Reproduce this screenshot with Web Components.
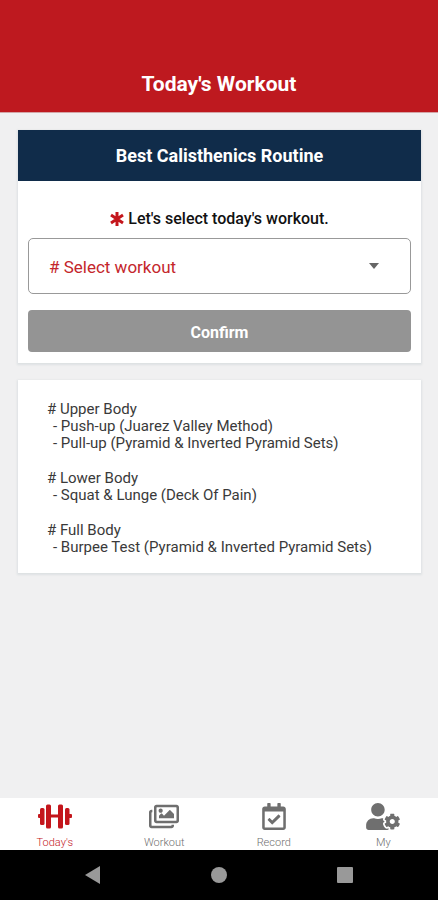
<!DOCTYPE html>
<html lang="en">
<head>
<meta charset="utf-8">
<meta name="viewport" content="width=device-width, initial-scale=1">
<title>Today's Workout</title>
<style>
  body {
    margin: 0;
    font-family: Roboto, "Liberation Sans", sans-serif;
    background-color: #f0f0f1;
    color: #3a3a3a;
  }
</style>
</head>
<body>
<workout-app></workout-app>

<script>
const icons = {
  dumbbell: `<svg width="34" height="27" viewBox="0 0 34 27"><rect y="11" width="4" height="4" rx="1"/><rect x="30" y="11" width="4" height="4" rx="1"/><rect x="10" y="11.500" width="14" height="3"/><rect x="2" y="5" width="4.500" height="17" rx="1.500"/><rect x="8" y="1.500" width="5" height="24" rx="1.500"/><rect x="20" y="1.500" width="5" height="24" rx="1.500"/><rect x="27" y="5" width="4.500" height="17" rx="1.500"/></svg>`,
  images: `<svg width="30" height="27" viewBox="0 0 576 512"><path d="M480 416v16c0 26.51-21.49 48-48 48H48c-26.51 0-48-21.49-48-48V176c0-26.51 21.49-48 48-48h16v48H54a6 6 0 0 0-6 6v244a6 6 0 0 0 6 6h372a6 6 0 0 0 6-6v-10h48zm42-336H150a6 6 0 0 0-6 6v244a6 6 0 0 0 6 6h372a6 6 0 0 0 6-6V86a6 6 0 0 0-6-6zm6-48c26.51 0 48 21.49 48 48v256c0 26.51-21.49 48-48 48H144c-26.51 0-48-21.49-48-48V80c0-26.51 21.49-48 48-48h384zM264 144c0 22.091-17.909 40-40 40s-40-17.909-40-40 17.909-40 40-40 40 17.909 40 40zm-72 96l39.515-39.515c4.686-4.686 12.284-4.686 16.971 0L288 240l103.515-103.515c4.686-4.686 12.284-4.686 16.971 0L480 208v80H192v-48z"/></svg>`,
  calendar: `<svg width="24" height="27" viewBox="0 0 448 512"><path d="M400 64h-48V12c0-6.627-5.373-12-12-12h-40c-6.627 0-12 5.373-12 12v52H160V12c0-6.627-5.373-12-12-12h-40c-6.627 0-12 5.373-12 12v52H48C21.49 64 0 85.49 0 112v352c0 26.51 21.49 48 48 48h352c26.51 0 48-21.49 48-48V112c0-26.51-21.49-48-48-48zm-6 400H54a6 6 0 0 1-6-6V160h352v298a6 6 0 0 1-6 6zm-52.849-200.65L198.842 404.519c-4.705 4.667-12.303 4.637-16.971-.068l-75.091-75.699c-4.667-4.705-4.637-12.303.068-16.971l22.719-22.536c4.705-4.667 12.303-4.637 16.97.069l44.104 44.461 111.072-110.181c4.705-4.667 12.303-4.637 16.971.068l22.536 22.718c4.667 4.705 4.636 12.303-.069 16.97z"/></svg>`,
  user: `<svg width="34" height="27" viewBox="0 0 640 512"><path d="M610.5 373.3c2.6-14.1 2.6-28.5 0-42.6l25.8-14.9c3-1.7 4.3-5.2 3.3-8.5-6.7-21.6-18.2-41.2-33.2-57.4-2.3-2.5-6-3.1-9-1.4l-25.8 14.9c-10.9-9.3-23.4-16.5-36.9-21.3v-29.8c0-3.4-2.4-6.4-5.7-7.1-22.3-5-45-4.8-66.2 0-3.3.7-5.7 3.7-5.7 7.1v29.8c-13.5 4.8-26 12-36.9 21.3l-25.8-14.9c-2.9-1.7-6.7-1.1-9 1.4-15 16.2-26.5 35.8-33.2 57.4-1 3.3.4 6.8 3.3 8.5l25.8 14.9c-2.6 14.1-2.6 28.5 0 42.6l-25.8 14.9c-3 1.7-4.3 5.2-3.3 8.5 6.7 21.6 18.2 41.1 33.2 57.4 2.3 2.5 6 3.1 9 1.4l25.8-14.9c10.9 9.3 23.4 16.5 36.9 21.3v29.8c0 3.4 2.4 6.4 5.7 7.1 22.3 5 45 4.8 66.2 0 3.3-.7 5.7-3.7 5.7-7.1v-29.8c13.5-4.8 26-12 36.9-21.3l25.8 14.9c2.9 1.7 6.7 1.1 9-1.4 15-16.2 26.5-35.8 33.2-57.4 1-3.3-.4-6.8-3.3-8.5l-25.8-14.9zM496 400.5c-26.8 0-48.5-21.8-48.5-48.5s21.8-48.5 48.5-48.5 48.5 21.8 48.5 48.5-21.7 48.5-48.5 48.5zM224 256c70.7 0 128-57.3 128-128S294.7 0 224 0 96 57.3 96 128s57.3 128 128 128zm201.2 226.5c-2.3-1.2-4.6-2.6-6.8-3.9l-7.9 4.6c-6 3.4-12.8 5.3-19.6 5.3-10.9 0-21.4-4.6-28.9-12.6-18.3-19.8-32.3-43.9-40.2-69.6-5.5-17.7 1.9-36.4 17.9-45.7l7.9-4.6c-.1-2.6-.1-5.2 0-7.8l-7.9-4.6c-16-9.2-23.4-28-17.9-45.7.9-2.9 2.2-5.8 3.2-8.7-3.8-.3-7.5-1.2-11.4-1.2h-16.7c-22.2 10.2-46.9 16-72.9 16s-50.6-5.8-72.9-16h-16.7C60.2 288 0 348.2 0 422.4V464c0 26.5 21.5 48 48 48h352c10.1 0 19.5-3.2 27.2-8.5-1.2-3.8-2-7.7-2-11.8v-9.2z"/></svg>`,
};

class AppHeader extends HTMLElement {
  constructor() {
    super();
    this.attachShadow({ mode: "open" });
  }
  connectedCallback() {
    this.shadowRoot.innerHTML = `
    <style>
      :host {
        display: block;
        padding: 70px 16px 14px;
        background-color: #be191f;
        border-bottom: 1px solid #d3a5a7;
        color: #fff;
        text-align: center;
      }
      h1 {
        margin: 0;
        font-size: 21px;
        line-height: 28px;
        font-weight: 700;
      }
    </style>
    <h1><slot></slot></h1>
    `;
  }
}

class AppCard extends HTMLElement {
  constructor() {
    super();
    this.attachShadow({ mode: "open" });
  }
  connectedCallback() {
    const title = this.getAttribute("heading");
    this.shadowRoot.innerHTML = `
    <style>
      :host {
        display: block;
        background-color: #fff;
        box-shadow: 0 1px 2px 1px #dde1e3;
      }
      h2 {
        margin: 0;
        background-color: #102c4a;
        color: #fff;
        font-size: 18px;
        line-height: 51px;
        font-weight: 700;
        text-align: center;
      }
    </style>
    ${title ? `<h2>${title}</h2>` : ""}
    <slot></slot>
    `;
  }
}

class WorkoutPicker extends HTMLElement {
  constructor() {
    super();
    this.attachShadow({ mode: "open" });
  }
  connectedCallback() {
    this.render();
    this.setupEventListeners();
  }
  render() {
    this.shadowRoot.innerHTML = `
    <style>
      :host {
        display: flex;
        flex-direction: column;
        padding: 28px 10px 11px;
      }
      label {
        display: flex;
        align-items: center;
        justify-content: center;
        gap: 4px;
        margin-bottom: 9px;
        color: #111;
        font-size: 16px;
        line-height: 20px;
        font-weight: 500;
      }
      .field {
        display: grid;
        align-items: center;
        margin-bottom: 16px;
      }
      .field > * {
        grid-area: 1 / 1;
      }
      select {
        appearance: none;
        width: 100%;
        height: 56px;
        padding: 2px 48px 0 20px;
        border: 1px solid #999;
        border-radius: 5px;
        background-color: #fff;
        color: #c4262c;
        font-family: inherit;
        font-size: 17px;
      }
      .arrow {
        justify-self: end;
        margin-right: 32px;
        fill: #666;
        pointer-events: none;
      }
      button {
        height: 42px;
        padding: 2px 0 0;
        border: none;
        border-radius: 4px;
        background-color: #949494;
        color: #fff;
        font-family: inherit;
        font-size: 16px;
        font-weight: 700;
      }
    </style>
    <label for="workout">
      <svg width="14" height="16" viewBox="0 0 14 16" fill="none" stroke="#c4161c" stroke-width="3"><path d="M7 1v14M1 4l12 8M1 12l12-8"/></svg>
      Let's select today's workout.
    </label>
    <div class="field">
      <select id="workout">
        <option value=""># Select workout</option>
        <option>Upper Body</option>
        <option>Lower Body</option>
        <option>Full Body</option>
      </select>
      <svg class="arrow" width="10" height="6" viewBox="0 0 10 6"><path d="M0 0h10L5 6z"/></svg>
    </div>
    <button type="button" id="confirm-btn">Confirm</button>
    `;
  }
  setupEventListeners() {
    const select = this.shadowRoot.getElementById("workout");
    this.shadowRoot.getElementById("confirm-btn").addEventListener("click", () => {
      if (select.value) {
        this.dispatchEvent(new CustomEvent("workoutConfirmed", { detail: select.value }));
      }
    });
  }
}

class WorkoutGroup extends HTMLElement {
  constructor() {
    super();
    this.attachShadow({ mode: "open" });
  }
  connectedCallback() {
    this.shadowRoot.innerHTML = `
    <style>
      :host {
        display: block;
        font-size: 15px;
        line-height: 17px;
      }
      h3 {
        margin: 0;
        font-size: inherit;
        font-weight: 400;
      }
      ::slotted(div) {
        padding-left: 6px;
      }
    </style>
    <h3># ${this.getAttribute("name")}</h3>
    <slot></slot>
    `;
  }
}

class TabItem extends HTMLElement {
  constructor() {
    super();
    this.attachShadow({ mode: "open" });
  }
  connectedCallback() {
    this.shadowRoot.innerHTML = `
    <style>
      :host {
        display: block;
        flex: 1;
        color: #6f6f6f;
      }
      :host([active]) {
        color: #c4161c;
      }
      a {
        display: flex;
        flex-direction: column;
        align-items: center;
        gap: 7px;
        padding-top: 5px;
        color: inherit;
        font-size: 11px;
        line-height: 12px;
        font-weight: 300;
        text-decoration: none;
      }
      svg {
        display: block;
        fill: currentColor;
      }
    </style>
    <a href="#">${icons[this.getAttribute("icon")]}<slot></slot></a>
    `;
  }
}

class SystemBar extends HTMLElement {
  constructor() {
    super();
    this.attachShadow({ mode: "open" });
  }
  connectedCallback() {
    this.shadowRoot.innerHTML = `
    <style>
      :host {
        display: flex;
        justify-content: center;
        gap: 92px;
        padding: 8px 0;
        background-color: #000;
      }
      button {
        display: grid;
        place-items: center;
        width: 34px;
        height: 34px;
        padding: 0;
        border: none;
        background: none;
      }
      svg {
        fill: #999;
      }
    </style>
    <button type="button" aria-label="Back"><svg width="18" height="20" viewBox="0 0 18 20"><path d="M16 1v18L1 10z"/></svg></button>
    <button type="button" aria-label="Home"><svg width="16" height="16"><circle cx="8" cy="8" r="8"/></svg></button>
    <button type="button" aria-label="Recent apps"><svg width="16" height="16"><rect width="16" height="16" rx="1"/></svg></button>
    `;
  }
}

class WorkoutApp extends HTMLElement {
  constructor() {
    super();
    this.attachShadow({ mode: "open" });
  }
  connectedCallback() {
    this.shadowRoot.innerHTML = `
    <style>
      :host {
        display: flex;
        flex-direction: column;
        min-height: 100vh;
      }
      main {
        flex: 1;
        display: flex;
        flex-direction: column;
        gap: 17px;
        padding: 17px 17px 17px 18px;
      }
      .routine {
        display: flex;
        flex-direction: column;
        gap: 18px;
        padding: 21px 29px 17px;
      }
      .tabs {
        display: flex;
        height: 52px;
        background-color: #fff;
      }
    </style>
    <app-header>Today's Workout</app-header>
    <main>
      <app-card heading="Best Calisthenics Routine">
        <workout-picker></workout-picker>
      </app-card>
      <app-card>
        <div class="routine">
          <workout-group name="Upper Body">
            <div>- Push-up (Juarez Valley Method)</div>
            <div>- Pull-up (Pyramid &amp; Inverted Pyramid Sets)</div>
          </workout-group>
          <workout-group name="Lower Body">
            <div>- Squat &amp; Lunge (Deck Of Pain)</div>
          </workout-group>
          <workout-group name="Full Body">
            <div>- Burpee Test (Pyramid &amp; Inverted Pyramid Sets)</div>
          </workout-group>
        </div>
      </app-card>
    </main>
    <nav class="tabs">
      <tab-item icon="dumbbell" active>Today's</tab-item>
      <tab-item icon="images">Workout</tab-item>
      <tab-item icon="calendar">Record</tab-item>
      <tab-item icon="user">My</tab-item>
    </nav>
    <system-bar></system-bar>
    `;
  }
}

customElements.define("app-header", AppHeader);
customElements.define("app-card", AppCard);
customElements.define("workout-picker", WorkoutPicker);
customElements.define("workout-group", WorkoutGroup);
customElements.define("tab-item", TabItem);
customElements.define("system-bar", SystemBar);
customElements.define("workout-app", WorkoutApp);
</script>
</body>
</html>
